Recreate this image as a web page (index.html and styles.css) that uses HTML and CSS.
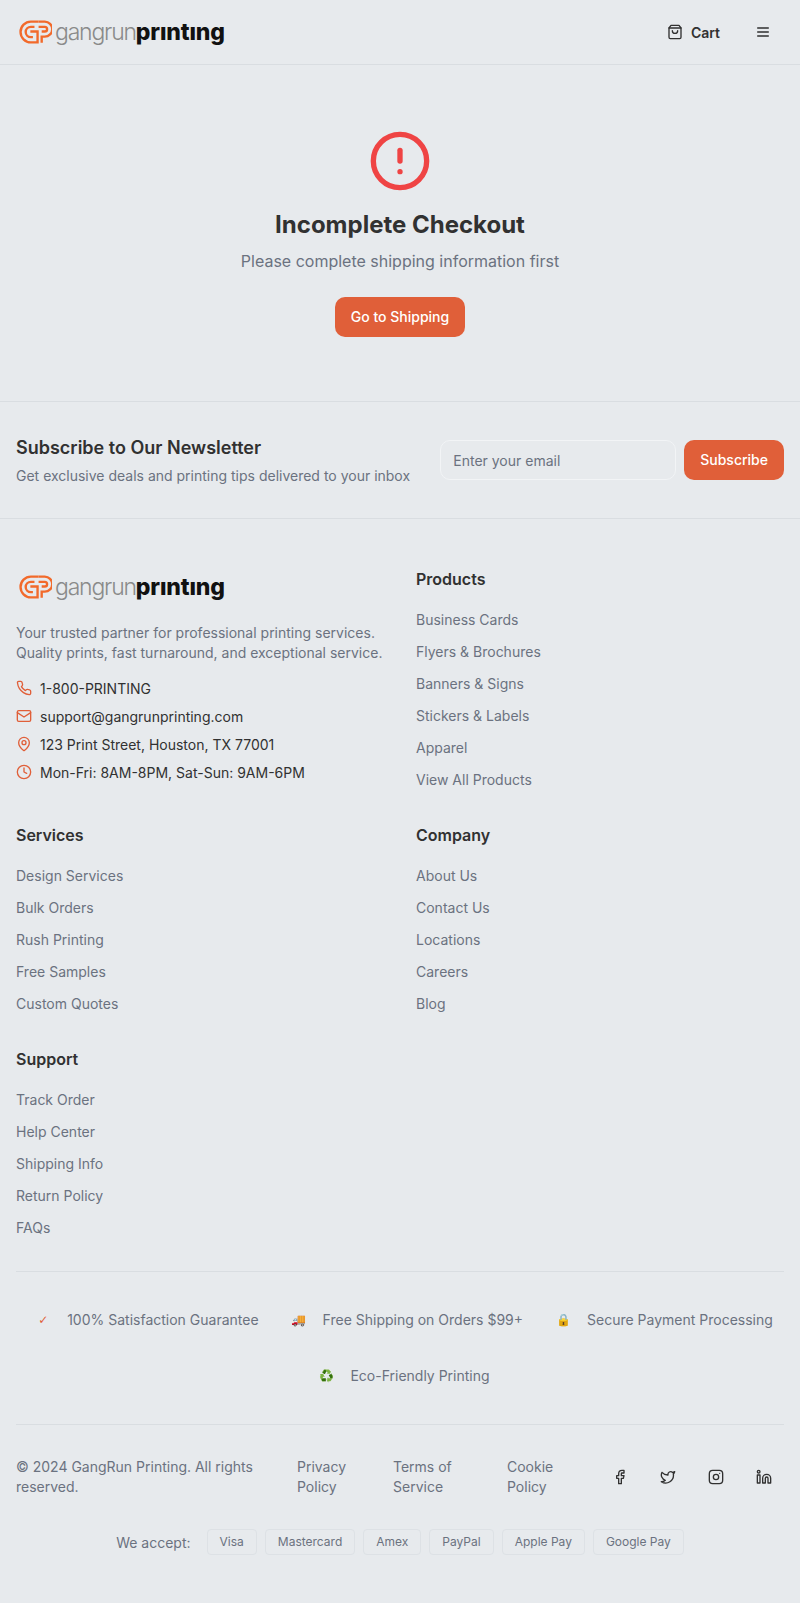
FILE: index.html
```html
<!DOCTYPE html>
<html lang="en">
<head>
    <meta charset="UTF-8">
    <meta name="viewport" content="width=device-width, initial-scale=1.0">
    <title>Incomplete Checkout - GangRun Printing</title>
    <link rel="stylesheet" href="styles.css">
</head>
<body>

    <header class="site-header">
        <a class="logo" href="#">
            <svg class="logo-mark" viewBox="0 0 32 23" fill="none" stroke="#f26a2b" stroke-width="2.300">
                <path d="M19 1.500H11.500a10 10 0 0 0 0 20H18V11h-7"/>
                <path d="M15 6.500h-3.500a5 5 0 0 0 0 10h2"/>
                <path d="M22 22v-6h3a7.250 7.250 0 0 0 0-14.500h-6"/>
                <path d="M22 11h3a2.250 2.250 0 0 0 0-4.500h-6"/>
            </svg>
            <span class="logo-text"><span class="logo-light">gangrun</span><span class="logo-bold">prıntıng</span></span>
        </a>
        <nav class="header-actions">
            <a class="cart-link" href="#">
                <svg class="icon-16" viewBox="0 0 24 24" fill="none" stroke="currentColor" stroke-width="2" stroke-linecap="round" stroke-linejoin="round">
                    <path d="M6 2 3 6v14a2 2 0 0 0 2 2h14a2 2 0 0 0 2-2V6l-3-4z"/><path d="M3 6h18"/><path d="M16 10a4 4 0 0 1-8 0"/>
                </svg>
                Cart
            </a>
            <button class="menu-btn" aria-label="Menu">
                <svg class="icon-16" viewBox="0 0 24 24" fill="none" stroke="currentColor" stroke-width="2" stroke-linecap="round">
                    <path d="M4 6h16M4 12h16M4 18h16"/>
                </svg>
            </button>
        </nav>
    </header>

    <main class="notice">
        <svg class="notice-icon" viewBox="0 0 24 24" fill="none" stroke="#ef4444" stroke-width="2" stroke-linecap="round">
            <circle cx="12" cy="12" r="10"/><path d="M12 8v4"/><path d="M12 16h.01"/>
        </svg>
        <h1>Incomplete Checkout</h1>
        <p>Please complete shipping information first</p>
        <a class="btn notice-btn" href="#">Go to Shipping</a>
    </main>

    <section class="newsletter">
        <div class="newsletter-copy">
            <h2>Subscribe to Our Newsletter</h2>
            <p>Get exclusive deals and printing tips delivered to your inbox</p>
        </div>
        <form class="newsletter-form">
            <input type="email" placeholder="Enter your email">
            <button class="btn" type="button">Subscribe</button>
        </form>
    </section>

    <footer class="site-footer">
        <div class="footer-grid">
            <div class="footer-brand">
                <a class="logo" href="#">
                    <svg class="logo-mark" viewBox="0 0 32 23" fill="none" stroke="#f26a2b" stroke-width="2.300">
                        <path d="M19 1.500H11.500a10 10 0 0 0 0 20H18V11h-7"/>
                        <path d="M15 6.500h-3.500a5 5 0 0 0 0 10h2"/>
                        <path d="M22 22v-6h3a7.250 7.250 0 0 0 0-14.500h-6"/>
                        <path d="M22 11h3a2.250 2.250 0 0 0 0-4.500h-6"/>
                    </svg>
                    <span class="logo-text"><span class="logo-light">gangrun</span><span class="logo-bold">prıntıng</span></span>
                </a>
                <p class="brand-text">Your trusted partner for professional printing services. Quality prints, fast turnaround, and exceptional service.</p>
                <ul class="contact-list">
                    <li>
                        <svg class="icon-16 accent" viewBox="0 0 24 24" fill="none" stroke="currentColor" stroke-width="2" stroke-linecap="round" stroke-linejoin="round"><path d="M22 16.900v3a2 2 0 0 1-2.200 2 19.800 19.800 0 0 1-8.600-3 19.500 19.500 0 0 1-6-6 19.800 19.800 0 0 1-3-8.700A2 2 0 0 1 4.100 2h3a2 2 0 0 1 2 1.700c.1 1 .4 1.900.7 2.800a2 2 0 0 1-.5 2.100L8.100 9.900a16 16 0 0 0 6 6l1.300-1.300a2 2 0 0 1 2.100-.4c.9.3 1.800.6 2.800.7a2 2 0 0 1 1.700 2z"/></svg>
                        1-800-PRINTING
                    </li>
                    <li>
                        <svg class="icon-16 accent" viewBox="0 0 24 24" fill="none" stroke="currentColor" stroke-width="2" stroke-linecap="round" stroke-linejoin="round"><rect x="2" y="4" width="20" height="16" rx="2"/><path d="M22 7l-10 6.500L2 7"/></svg>
                        support@gangrunprinting.com
                    </li>
                    <li>
                        <svg class="icon-16 accent" viewBox="0 0 24 24" fill="none" stroke="currentColor" stroke-width="2" stroke-linecap="round" stroke-linejoin="round"><path d="M20 10c0 5-5.500 10.200-7.400 11.800a1 1 0 0 1-1.200 0C9.500 20.200 4 15 4 10a8 8 0 0 1 16 0"/><circle cx="12" cy="10" r="3"/></svg>
                        123 Print Street, Houston, TX 77001
                    </li>
                    <li>
                        <svg class="icon-16 accent" viewBox="0 0 24 24" fill="none" stroke="currentColor" stroke-width="2" stroke-linecap="round" stroke-linejoin="round"><circle cx="12" cy="12" r="10"/><path d="M12 6v6l4 2"/></svg>
                        Mon-Fri: 8AM-8PM, Sat-Sun: 9AM-6PM
                    </li>
                </ul>
            </div>

            <div class="footer-col">
                <h3>Products</h3>
                <a href="#">Business Cards</a>
                <a href="#">Flyers &amp; Brochures</a>
                <a href="#">Banners &amp; Signs</a>
                <a href="#">Stickers &amp; Labels</a>
                <a href="#">Apparel</a>
                <a href="#">View All Products</a>
            </div>

            <div class="footer-col">
                <h3>Services</h3>
                <a href="#">Design Services</a>
                <a href="#">Bulk Orders</a>
                <a href="#">Rush Printing</a>
                <a href="#">Free Samples</a>
                <a href="#">Custom Quotes</a>
            </div>

            <div class="footer-col">
                <h3>Company</h3>
                <a href="#">About Us</a>
                <a href="#">Contact Us</a>
                <a href="#">Locations</a>
                <a href="#">Careers</a>
                <a href="#">Blog</a>
            </div>

            <div class="footer-col support-col">
                <h3>Support</h3>
                <a href="#">Track Order</a>
                <a href="#">Help Center</a>
                <a href="#">Shipping Info</a>
                <a href="#">Return Policy</a>
                <a href="#">FAQs</a>
            </div>
        </div>

        <div class="badges">
            <span class="badge"><span class="badge-icon check">✓</span>100% Satisfaction Guarantee</span>
            <span class="badge"><span class="badge-icon">🚚</span>Free Shipping on Orders $99+</span>
            <span class="badge"><span class="badge-icon">🔒</span>Secure Payment Processing</span>
            <span class="badge"><span class="badge-icon">♻️</span>Eco-Friendly Printing</span>
        </div>

        <div class="legal">
            <p class="copyright">© 2024 GangRun Printing. All rights reserved.</p>
            <div class="legal-links">
                <a href="#">Privacy Policy</a>
                <a href="#">Terms of Service</a>
                <a href="#">Cookie Policy</a>
            </div>
            <div class="social">
                <a href="#" aria-label="Facebook"><svg class="icon-16" viewBox="0 0 24 24" fill="none" stroke="currentColor" stroke-width="2" stroke-linecap="round" stroke-linejoin="round"><path d="M18 2h-3a5 5 0 0 0-5 5v3H7v4h3v8h4v-8h3l1-4h-4V7a1 1 0 0 1 1-1h3z"/></svg></a>
                <a href="#" aria-label="Twitter"><svg class="icon-16" viewBox="0 0 24 24" fill="none" stroke="currentColor" stroke-width="2" stroke-linecap="round" stroke-linejoin="round"><path d="M22 4s-.7 2.100-2 3.400c1.600 10-9.400 17.300-18 11.600 2.200.1 4.400-.6 6-2C3 15.500.500 9.600 3 5c2.200 2.600 5.600 4.100 9 4-.9-4.200 4-6.600 7-3.800 1.100 0 3-1.200 3-1.200z"/></svg></a>
                <a href="#" aria-label="Instagram"><svg class="icon-16" viewBox="0 0 24 24" fill="none" stroke="currentColor" stroke-width="2" stroke-linecap="round" stroke-linejoin="round"><rect x="2" y="2" width="20" height="20" rx="5"/><circle cx="12" cy="12" r="4"/><path d="M17.500 6.500h.01"/></svg></a>
                <a href="#" aria-label="LinkedIn"><svg class="icon-16" viewBox="0 0 24 24" fill="none" stroke="currentColor" stroke-width="2" stroke-linecap="round" stroke-linejoin="round"><path d="M16 8a6 6 0 0 1 6 6v7h-4v-7a2 2 0 0 0-4 0v7h-4v-7a6 6 0 0 1 6-6z"/><rect x="2" y="9" width="4" height="12"/><circle cx="4" cy="4" r="2"/></svg></a>
            </div>
        </div>

        <div class="payments">
            <span class="payments-label">We accept:</span>
            <span class="pay-chip">Visa</span>
            <span class="pay-chip">Mastercard</span>
            <span class="pay-chip">Amex</span>
            <span class="pay-chip">PayPal</span>
            <span class="pay-chip">Apple Pay</span>
            <span class="pay-chip">Google Pay</span>
        </div>
    </footer>

</body>
</html>
```

FILE: styles.css
```css
* {
    box-sizing: border-box;
}

body {
    font-family: 'Inter', sans-serif;
    background-color: #e7eaed;
    color: #313131;
    margin: 0;
    padding: 0;
    font-size: 14px;
}

a {
    color: inherit;
    text-decoration: none;
}

h1, h2, h3, p, ul {
    margin: 0;
    padding: 0;
}

.icon-16 {
    width: 16px;
    height: 16px;
    flex-shrink: 0;
}

.accent {
    color: #e05f39;
}

/* header */
.site-header {
    height: 65px;
    border-bottom: 1px solid #d9dde1;
    display: flex;
    align-items: center;
    justify-content: space-between;
    padding: 0 29px 0 19px;
}

.logo {
    display: flex;
    align-items: center;
    height: 26px;
}

.logo-mark {
    width: 33px;
    height: 24px;
    flex-shrink: 0;
}

.logo-text {
    font-size: 23px;
    line-height: 26px;
    margin-left: 3px;
}

.logo-light {
    color: #8a8a8a;
    font-weight: 300;
    letter-spacing: -1.2px;
}

.logo-bold {
    color: #111;
    font-weight: 800;
    letter-spacing: -0.15px;
}

.header-actions {
    display: flex;
    align-items: center;
    gap: 35px;
}

.cart-link {
    display: flex;
    align-items: center;
    gap: 8px;
    font-weight: 600;
}

.menu-btn {
    display: flex;
    border: none;
    background: none;
    padding: 0;
    color: #313131;
}

/* notice */
.notice {
    height: 337px;
    border-bottom: 1px solid #d9dde1;
    display: flex;
    flex-direction: column;
    align-items: center;
    padding-top: 64px;
}

.notice-icon {
    width: 64px;
    height: 64px;
}

.notice h1 {
    font-size: 24px;
    line-height: 32px;
    font-weight: 700;
    margin-top: 16px;
}

.notice p {
    font-size: 16px;
    line-height: 24px;
    color: #6b7280;
    margin-top: 8px;
}

.btn {
    display: block;
    background-color: #e05f39;
    color: #fff;
    border: none;
    border-radius: 10px;
    font-family: inherit;
    font-size: 14px;
    line-height: 20px;
    font-weight: 500;
    padding: 10px 16px;
    height: 40px;
}

.notice-btn {
    margin-top: 24px;
}

/* newsletter */
.newsletter {
    height: 117px;
    border-bottom: 1px solid #d9dde1;
    display: flex;
    align-items: center;
    justify-content: space-between;
    padding: 0 16px;
}

.newsletter h2 {
    font-size: 18px;
    line-height: 28px;
    font-weight: 600;
}

.newsletter p {
    font-size: 14px;
    line-height: 20px;
    color: #6b7280;
    margin-top: 4px;
}

.newsletter-form {
    display: flex;
    gap: 8px;
}

.newsletter-form input {
    width: 236px;
    height: 40px;
    border: 1px solid #f2f4f6;
    border-radius: 10px;
    background: transparent;
    padding: 0 12px;
    font-family: inherit;
    font-size: 14px;
}

.newsletter-form input::placeholder {
    color: #6b7280;
}

/* footer */
.site-footer {
    padding: 48px 16px 48px;
}

.footer-grid {
    display: grid;
    grid-template-columns: 1fr 1fr;
    column-gap: 32px;
    row-gap: 32.500px;
    padding-bottom: 33px;
    border-bottom: 1px solid #d9dde1;
}

.brand-text {
    color: #6b7280;
    line-height: 20px;
    margin-top: 23px;
}

.footer-brand .logo {
    margin-left: 3px;
    margin-top: 7px;
}

.contact-list {
    list-style: none;
    margin-top: 15px;
}

.contact-list li {
    display: flex;
    align-items: center;
    gap: 8px;
    height: 20px;
    margin-bottom: 8px;
}

.footer-col h3 {
    font-size: 16px;
    line-height: 24px;
    font-weight: 600;
    margin-bottom: 19px;
}

.footer-col a {
    display: block;
    color: #6b7280;
    line-height: 20px;
    margin-bottom: 12px;
}

.footer-col a:last-child {
    margin-bottom: 0;
}

.support-col {
    margin-top: 1px;
}

.badges {
    display: flex;
    flex-wrap: wrap;
    justify-content: center;
    column-gap: 32px;
    row-gap: 32px;
    padding: 36px 0 36px 8px;
    border-bottom: 1px solid #d9dde1;
}

.badge {
    display: flex;
    align-items: center;
    color: #6b7280;
    line-height: 24px;
}

.badge-icon {
    width: 16px;
    margin-right: 16px;
    text-align: center;
    font-size: 12px;
}

.badge-icon.check {
    color: #e05f39;
    font-family: 'DejaVu Sans', sans-serif;
}

.legal {
    display: flex;
    align-items: center;
    padding-top: 32px;
}

.copyright {
    width: 250px;
    color: #6b7280;
    line-height: 20px;
}

.legal-links {
    display: flex;
    gap: 24px;
    margin-left: 31px;
    color: #6b7280;
    line-height: 20px;
}

.legal-links a:nth-child(1) {
    width: 72px;
}

.legal-links a:nth-child(2) {
    width: 90px;
}

.legal-links a:nth-child(3) {
    width: 64px;
}

.social {
    display: flex;
    gap: 32px;
    margin-left: auto;
    padding-right: 12px;
}

.social a {
    display: flex;
}

.payments {
    display: flex;
    align-items: center;
    justify-content: center;
    gap: 8px;
    margin-top: 32px;
}

.payments-label {
    color: #6b7280;
    margin-right: 8px;
}

.pay-chip {
    font-size: 12px;
    line-height: 16px;
    color: #6b7280;
    padding: 4px 12px;
    border: 1px solid #dde1e5;
    border-radius: 4px;
    height: 26px;
}
```
